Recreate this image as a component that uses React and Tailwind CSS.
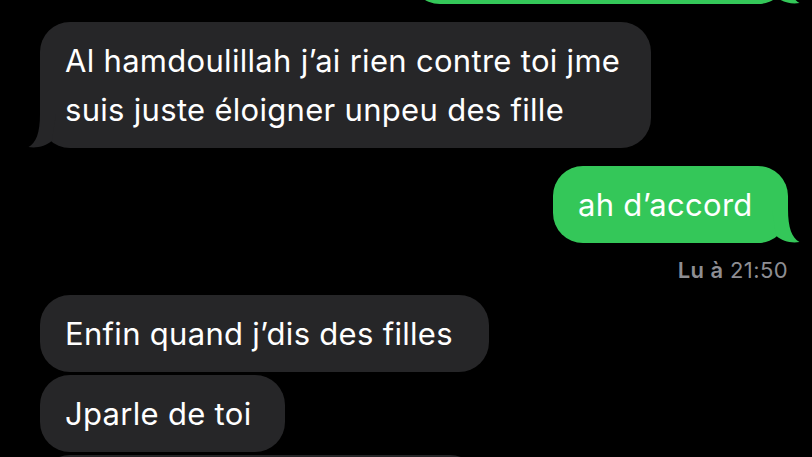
import React from 'react';

const GREY = '#262628';
const GREEN = '#34c759';

const Tail = ({ side, color }) => {
    // iMessage style tail, drawn relative to the bubble's bottom corner
    const isLeft = side === 'left';
    return (
        <svg
            className={`absolute bottom-0 ${isLeft ? 'left-[-12px]' : 'right-[-12px] -scale-x-100'}`}
            width="30"
            height="36"
            viewBox="-12 -36 30 36"
        >
            <path d="M 0 -34 C 0 -15 -4 -5 -11.5 -1 C -4 0.5 6 -1.5 12 -7.5 L 16 -34 Z" fill={color} />
        </svg>
    );
};

const Bubble = ({ children, me, tail, className = '' }) => (
    <div
        className={`relative shrink-0 rounded-[30px] px-[25px] py-[14px] text-[31px] leading-[49px] text-white whitespace-nowrap tracking-[0.3px] ${
            me ? 'self-end bg-[#34c759]' : 'self-start bg-[#262628]'
        } ${className}`}
    >
        {children}
        {tail && <Tail side={me ? 'right' : 'left'} color={me ? GREEN : GREY} />}
    </div>
);

export default function App() {
    return (
        <div className="w-[812px] h-[457px] overflow-hidden bg-black flex flex-col pl-[40px] pr-[24px] font-['Inter','Noto_Sans',sans-serif]">
            <Bubble me tail className="w-[378px] h-[77px] mt-[-73px]" />

            <Bubble tail className="w-[611px] mt-[18px]">
                Al hamdoulillah j’ai rien contre toi jme
                <br />
                suis juste éloigner unpeu des fille
            </Bubble>

            <Bubble me tail className="w-[235px] mt-[18px]">
                ah d’accord
            </Bubble>

            <div className="self-end shrink-0 mt-[15px] text-[22px] leading-[24px] tracking-[0.4px] text-[#8e8e93]">
                <span className="font-semibold">Lu à</span> 21:50
            </div>

            <Bubble className="w-[449px] mt-[13px]">Enfin quand j’dis des filles</Bubble>
            <Bubble className="w-[245px] mt-[3px]">Jparle de toi</Bubble>
            <Bubble className="w-[440px] h-[77px] mt-[3px]" />
        </div>
    );
}
